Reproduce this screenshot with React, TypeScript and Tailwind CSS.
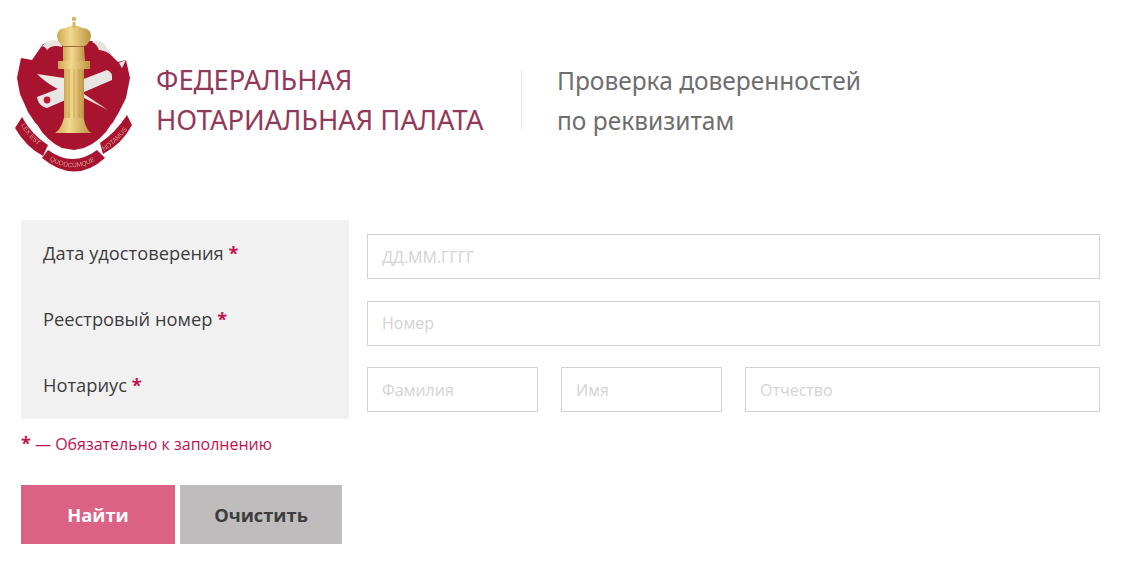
import React from "react";

const openSans = { fontFamily: '"Open Sans", "Noto Sans", sans-serif' };

// герб палаты, координаты сняты с увеличенного фрагмента
function Emblem() {
  return (
    <svg width="118" height="157" viewBox="15 17 118 157" className="shrink-0 blur-[0.4px]">
      <defs>
        <linearGradient id="gold" x1="0" x2="1" y1="0" y2="0">
          <stop offset="0" stopColor="#cda652" />
          <stop offset="0.4" stopColor="#f2d98f" />
          <stop offset="1" stopColor="#bd9442" />
        </linearGradient>
        <path id="ribbonLeft" d="M21 125 Q30 141 46 151" />
        <path id="ribbonMid" d="M47 158 Q73 177 101 157" />
        <path id="ribbonRight" d="M104 151 Q120 141 131 124" />
      </defs>
      {/* щит */}
      <path
        d="M21 58 L32 60 L43 44 L60 41 L92 41 L103 47 L112 56 L118 62 L126 60 L130 78 L126 98 L119 112 L112 124 Q100 142 84 148 L74 150 L62 148 Q48 142 36 124 L28 112 L20 94 L17 78 Z"
        fill="#a8142f"
      />
      {/* белые складки по краю */}
      <path d="M42 46 Q50 38 58 41 Q62 42 62 47 Q52 44 47 50 Q46 47 42 46 Z" fill="#e9e3df" />
      <path d="M92 42 Q100 38 105 45 L113 56 Q105 50 99 50 Q97 44 92 42 Z" fill="#e9e3df" />
      <path d="M119 63 L126 60 L122 68 Z" fill="#efe9e6" />
      <path d="M35 122 Q43 140 54 146 Q50 138 43 137 Q42 130 35 122 Z" fill="#f3efed" />
      <path d="M113 122 Q105 140 94 146 Q98 138 105 137 Q106 130 113 122 Z" fill="#f3efed" />
      {/* свиток */}
      <path d="M37 97 L107 70 Q113 72 112 80 L47 108 Q38 106 37 97 Z" fill="#e8e6e4" />
      <circle cx="47" cy="100" r="3.4" fill="#c4162f" />
      {/* перо */}
      <path d="M37 74 L64 78 L64 92 Q48 85 37 74 Z" fill="#eee9e6" />
      <path d="M84 94 L108 110 L84 98 Z" fill="#e5dedb" />
      {/* колонна */}
      <path d="M55 133 Q63 128 65 112 L83 112 Q84 128 91 133 Z" fill="url(#gold)" />
      <rect x="64" y="68" width="20" height="50" fill="url(#gold)" />
      <path d="M69 68 V118 M74 68 V118 M79 68 V118" stroke="#c69d4c" strokeWidth="0.8" />
      <path d="M58 61 H90 V69 H58 Z" fill="url(#gold)" />
      <path d="M63 47 H84 L85 61 H63 Z" fill="url(#gold)" />
      <rect x="63" y="45" width="21" height="2" fill="#9c6b3a" />
      {/* корона */}
      <path
        d="M63 46 Q57 42 57 35 Q58 28 66 28 Q70 25 74 26 Q78 25 82 28 Q90 28 91 35 Q91 42 85 46 Z"
        fill="url(#gold)"
      />
      <path d="M74 28 V22" stroke="#d8b566" strokeWidth="3" />
      <circle cx="74" cy="19" r="2.2" fill="#d8b566" />
      {/* лента с девизом */}
      <path d="M15 128 L22 117 Q32 135 48 145 L43 156 Q26 147 15 128 Z" fill="#a8142f" />
      <path d="M42 158 L48 150 Q73 168 97 150 L105 158 Q75 185 42 158 Z" fill="#a8142f" />
      <path d="M132 125 L127 115 Q116 132 100 143 L103 154 Q122 144 132 125 Z" fill="#a8142f" />
      <g fontSize="6.5" fill="#d99c90" style={{ fontFamily: '"Liberation Sans", sans-serif' }}>
        <text>
          <textPath href="#ribbonLeft">LEX EST</textPath>
        </text>
        <text>
          <textPath href="#ribbonMid" startOffset="3">QUODCUMQUE</textPath>
        </text>
        <text>
          <textPath href="#ribbonRight">NOTAMUS</textPath>
        </text>
      </g>
    </svg>
  );
}

function Field({ placeholder, className }: { placeholder: string; className: string }) {
  return (
    <input
      placeholder={placeholder}
      style={openSans}
      className={`h-[45px] border border-[#d2d2d2] bg-white px-[14px] text-[16px] outline-none placeholder:text-[#d3d3d3] ${className}`}
    />
  );
}

function Label({ text }: { text: string }) {
  return (
    <div className="text-[18.3px] leading-[24px] text-[#3d3d3d]">
      {text} <span className="font-bold text-[#c2114f]">*</span>
    </div>
  );
}

export default function App() {
  return (
    <div className="h-[583px] w-[1140px] overflow-hidden bg-white" style={openSans}>
      {/* шапка */}
      <header className="flex items-start pl-[15px] pt-[17px]">
        <Emblem />
        <div
          className="ml-[23px] mt-[43px] w-[365px] text-[27.4px] leading-[40px] text-[#93385a]"
          style={{ fontFamily: '"Noto Sans", sans-serif' }}
        >
          <div>ФЕДЕРАЛЬНАЯ</div>
          <div className="whitespace-nowrap">НОТАРИАЛЬНАЯ ПАЛАТА</div>
        </div>
        <div className="mt-[53px] h-[59px] w-px bg-[#ececec]" />
        <div
          className="ml-[35px] mt-[44px] text-[24.5px] leading-[40px] text-[#6e6e6e]"
          style={{ fontFamily: '"Noto Sans", sans-serif' }}
        >
          <div>Проверка доверенностей</div>
          <div>по реквизитам</div>
        </div>
      </header>

      {/* форма */}
      <div className="ml-[21px] mt-[46px] flex items-start">
        <div className="flex h-[199px] w-[328px] flex-col gap-[42px] bg-[#f2f1f2] pl-[22px] pt-[21px]">
          <Label text="Дата удостоверения" />
          <Label text="Реестровый номер" />
          <Label text="Нотариус" />
        </div>
        <div className="ml-[18px] flex w-[733px] flex-col gap-[21.5px] pt-[14px]">
          <Field placeholder="ДД.ММ.ГГГГ" className="w-full" />
          <Field placeholder="Номер" className="w-full" />
          <div className="flex">
            <Field placeholder="Фамилия" className="w-[171px]" />
            <Field placeholder="Имя" className="ml-[23px] w-[161px]" />
            <Field placeholder="Отчество" className="ml-[23px] w-[355px]" />
          </div>
        </div>
      </div>

      <div className="ml-[21px] mt-[14px] text-[16px] leading-[20px] text-[#c2114f]">
        <span className="text-[18px] font-bold">*</span> — Обязательно к заполнению
      </div>

      <div className="ml-[21px] mt-[31px] flex gap-[5px]">
        <button className="h-[59px] w-[154px] bg-[#dc6285] text-[18.3px] font-bold text-white">
          Найти
        </button>
        <button className="h-[59px] w-[162px] bg-[#bebcbd] text-[18.3px] font-bold text-[#3d3d3d]">
          Очистить
        </button>
      </div>
    </div>
  );
}
